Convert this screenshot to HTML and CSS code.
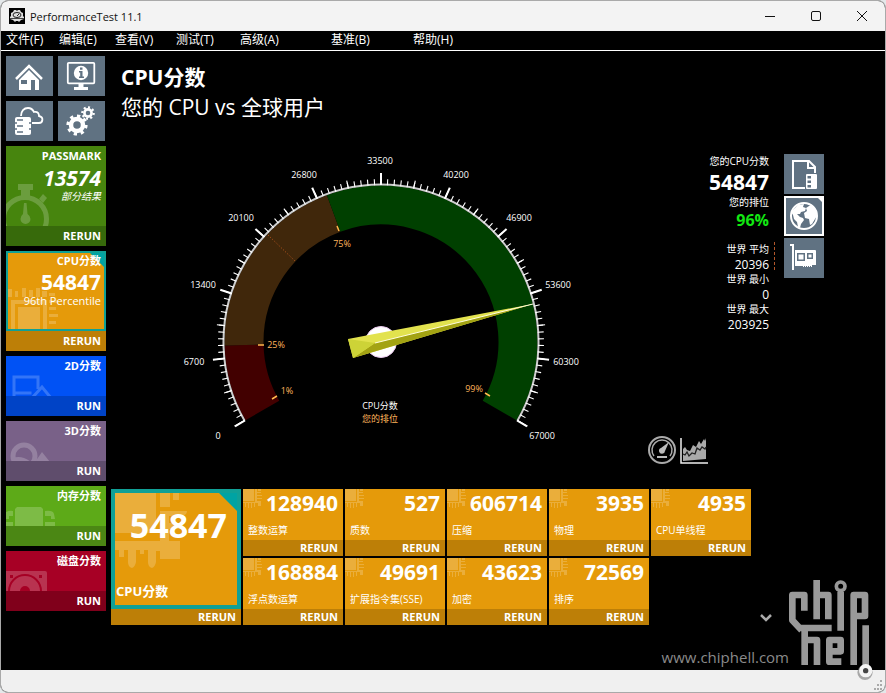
FILE: index.html
```html
<!DOCTYPE html>
<html lang="zh-CN">
<head>
<meta charset="utf-8">
<title>PerformanceTest 11.1</title>
<link rel="stylesheet" href="styles.css">
</head>
<body>
<svg class="defs" aria-hidden="true">
  <symbol id="chip" viewBox="0 0 20 20">
    <path d="M0 0h11v12H0zM12 0h2v13h-2zM14 3h4v1h-4zM14 6h5v1h-5zM14 9h5v1h-5zM0 13h14v1H0zM2 14h1v4H2zM5 14h1v5H5zM8 14h1v5H8zM11 14h1v4h-1zM14 12h4v5h-3v-3h-1zM15 0h3v2h-3z"/>
  </symbol>
</svg>
<div class="window">
  <header class="titlebar">
    <svg class="app-icon" viewBox="0 0 16 16" aria-hidden="true">
      <rect width="16" height="16" fill="#000"/>
      <path fill="#ddd" d="M5 2h2l1 1 1-1h2l1 2 2 1v3l1 1v2l-3 1-2 2-1-1H7l-1 1-2-2-3-1V9l1-1V5l2-1z"/>
      <ellipse cx="8" cy="7" rx="4" ry="2.500" fill="none" stroke="#222"/>
      <path d="M8 8l2-2" stroke="#222"/>
      <path d="M1 10.500h14" stroke="#444"/>
    </svg>
    <span class="app-name">PerformanceTest 11.1</span>
    <div class="window-buttons">
      <button type="button" aria-label="最小化"><svg viewBox="0 0 12 12"><path d="M1 6.500h10"/></svg></button>
      <button type="button" aria-label="最大化"><svg viewBox="0 0 12 12"><rect x="1.500" y="1.500" width="9" height="9" rx="1.500"/></svg></button>
      <button type="button" aria-label="关闭"><svg viewBox="0 0 12 12"><path d="M1 1l10 10M11 1L1 11"/></svg></button>
    </div>
  </header>
  <nav class="menubar">
    <a href="#">文件(F)</a><a href="#">编辑(E)</a><a href="#">查看(V)</a><a href="#">测试(T)</a><a href="#">高级(A)</a><a href="#">基准(B)</a><a href="#">帮助(H)</a>
  </nav>
  <div class="workspace">
    <aside class="sidebar">
      <div class="tools">
        <button class="tool" type="button" aria-label="主页"><svg viewBox="0 0 47 40">
          <path d="M10 23L23 10l13 13" fill="none" stroke="#fff" stroke-width="2.500"/>
          <path fill="#fff" fill-rule="evenodd" d="M13 24L23 14l10 10v10h-4V24h-4v10H13zM15 24v4h6v-4z"/></svg></button>
        <button class="tool" type="button" aria-label="系统信息"><svg viewBox="0 0 47 40">
          <rect x="9.800" y="6.800" width="26.500" height="20.500" rx="1" fill="none" stroke="#fff" stroke-width="1.800"/>
          <circle cx="23" cy="17" r="7.200" fill="#fff"/>
          <path fill="#607282" d="M21 15h3.500v5.500H26V22h-5v-1.500h1.200v-4H21zM22 11.500h2.500v2.300H22z"/>
          <path fill="#fff" d="M20.500 28h5v3H30v3H16v-3h4.500z"/></svg></button>
        <button class="tool" type="button" aria-label="云端基准"><svg viewBox="0 0 47 40">
          <path d="M15 15c0-5 3-8 7-8 3 0 5 2 6 4 4-1 5 2 5 4 5 1 4 7 0 7h-7" fill="none" stroke="#fff" stroke-width="1.800"/>
          <path fill="#fff" d="M11 16h12q2 0 2 2v14q0 2-2 2H11q-2 0-2-2V18q0-2 2-2z"/>
          <path stroke="#607282" stroke-width="1.500" d="M11 19h6M11 25h6M11 31h6M9 22h2M23 22h2M9 28h2M23 28h2"/></svg></button>
        <button class="tool" type="button" aria-label="设置"><svg viewBox="0 0 47 40" fill="none" stroke="#fff">
          <circle cx="19" cy="24" r="6" stroke-width="4.500"/>
          <circle cx="19" cy="24" r="9" stroke-width="3.200" pathLength="80" stroke-dasharray="4.600 5.400"/>
          <circle cx="30" cy="12" r="3.600" stroke-width="2.600"/>
          <circle cx="30" cy="12" r="5.700" stroke-width="2.200" pathLength="80" stroke-dasharray="4.600 5.400"/></svg></button>
      </div>

      <section class="tile passmark">
        <div class="tile-body tall">
          <svg class="art" viewBox="0 0 100 80"><circle cx="19" cy="73" r="21.500" fill="none" stroke="currentColor" stroke-width="5"/><path d="M12 38h15v6h-3v6h-9v-6h-3zM33 53l4-5 4 4-4 5zM18 57h2.500l1 11q3 2 3 5a5 5 0 0 1-10 0q0-3 2.500-5z"/></svg>
          <h2>PASSMARK</h2><strong class="italic">13574</strong><p class="italic">部分结果</p>
        </div>
        <button class="run" type="button">RERUN</button>
      </section>
      <section class="tile cpu">
        <div class="tile-body tall selected">
          <svg class="art" viewBox="2 2 96 76"><path fill-rule="evenodd" d="M5 49h36v31H5zM9 53v27h28V53zM12 56h22v24H12zM2 38h4v8H2zM9 40h3v6H9zM16 37h4v9h-4zM23 39h4v7h-4zM30 37h4v9h-4zM36 40h5v6h-5zM43 42h6v3h-6zM43 49h9v3h-9zM43 56h7v3h-7zM43 63h9v3h-9zM43 70h7v3h-7z"/></svg>
          <h2>CPU分数</h2><strong>54847</strong><p class="percentile-note">96th Percentile</p>
        </div>
        <button class="run" type="button">RERUN</button>
      </section>
      <section class="tile graphics2d">
        <div class="tile-body">
          <svg class="art" viewBox="0 0 100 40"><path fill="none" stroke="currentColor" stroke-width="3" d="M8 40V21h24v12M7.500 37h18M26 42l10-11 9 11"/></svg>
          <h2>2D分数</h2>
        </div>
        <button class="run" type="button">RUN</button>
      </section>
      <section class="tile graphics3d">
        <div class="tile-body">
          <svg class="art" viewBox="0 0 100 40"><circle cx="18" cy="35" r="11" fill="none" stroke="currentColor" stroke-width="5"/><path d="M29 41l7-10 8 10zM7 37q9-3 18 4H7z"/></svg>
          <h2>3D分数</h2>
        </div>
        <button class="run" type="button">RUN</button>
      </section>
      <section class="tile memory">
        <div class="tile-body">
          <svg class="art" viewBox="0 0 100 40"><path d="M11 21h24l2 2v17H9V23zM0 26q4-2 7-1v5H3v3H0zM39 25q8-1 9 3l1 5h-4v-3h-6zM0 36h7v4H0zM39 36h10v4H39z"/></svg>
          <h2>内存分数</h2>
        </div>
        <button class="run" type="button">RUN</button>
      </section>
      <section class="tile disk">
        <div class="tile-body">
          <svg class="art" viewBox="0 0 100 40"><path fill-rule="evenodd" d="M0 20h39q2 0 2 2v18h-5a17 17 0 0 0-34 0H0zM4 24v3h3v-3zM33 24v3h3v-3zM4 40a15 15 0 0 1 30 0h-10a5 5 0 0 0-10 0z"/></svg>
          <h2>磁盘分数</h2>
        </div>
        <button class="run" type="button">RUN</button>
      </section>
    </aside>

    <main class="content">
      <div class="heading">
        <h1>CPU分数</h1>
        <p>您的 CPU vs 全球用户</p>
      </div>

      <div class="overview">
        <svg class="gauge" viewBox="169 150 430 310" role="img" aria-label="CPU分数 54847">
          <g fill="none" stroke-width="39">
            <path stroke="#420000" d="M261.360 410.500A137 137 0 0 1 243.030 345"/>
            <path stroke="#40270b" d="M243.030 345A137 137 0 0 1 332.650 213.440"/>
            <path stroke="#004000" d="M332.650 213.440A137 137 0 0 1 498.640 410.500"/>
          </g>
          <path stroke="#c05a20" stroke-dasharray="1 2" d="M267 235l27 26"/>
          <g fill="none" stroke="#fff">
            <path stroke="#ccc" stroke-width="2" d="M243.600 420.750A157.500 157.500 0 1 1 516.400 420.750"/>
            <path stroke-width="6" pathLength="240" stroke-dasharray=".4 2" stroke-dashoffset=".2" d="M241.400 422A160 160 0 1 1 518.600 422"/>
            <path stroke-width="8" pathLength="240" stroke-dasharray=".4 11.600" stroke-dashoffset=".2" d="M240.570 422.500A161 161 0 1 1 519.430 422.500"/>
            <path stroke-width="12" pathLength="240" stroke-dasharray=".7 23.300" stroke-dashoffset=".35" d="M238.840 423.500A163 163 0 1 1 521.160 423.500"/>
            <path stroke-width="2" d="M244 420.500l-10 5.800M516 420.500l10 5.800"/>
          </g>
          <path stroke="#ffb84d" stroke-width="1.500" d="M257 345h6M271 399l5-3M336 226l2 5M484 393l5 3"/>
          <circle cx="380" cy="342" r="15.500" fill="#fff" stroke="#eccaf0"/>
          <path fill="#e2e24e" d="M347 339L532 304 352 358z"/>
          <path fill="#a3a313" d="M352 358l22-15L532 304z"/>
          <path fill="#cdd337" d="M347 339l5 19 22-15z"/>
          <path fill="none" stroke="#fffde0" d="M374 343L532 304"/>
          <g class="scale">
            <text x="217" y="439">0</text><text x="193" y="365">6700</text><text x="202" y="288">13400</text><text x="240" y="221">20100</text><text x="303" y="178">26800</text><text x="379" y="164">33500</text><text x="455" y="178">40200</text><text x="518" y="221">46900</text><text x="557" y="288">53600</text><text x="565" y="365">60300</text><text x="541" y="439">67000</text><text x="379" y="409">CPU分数</text>
          </g>
          <g class="scale percentile">
            <text x="286" y="394">1%</text><text x="275" y="348">25%</text><text x="341" y="247">75%</text><text x="473" y="392">99%</text><text x="379" y="422">您的排位</text>
          </g>
        </svg>

        <div class="details">
          <div class="details-top">
            <dl class="stats">
              <dt class="first">您的CPU分数</dt><dd class="score">54847</dd>
              <dt class="rank-label">您的排位</dt><dd class="rank">96%</dd>
              <div class="average"><dt>世界 平均</dt><dd>20396</dd></div>
              <dt>世界 最小</dt><dd>0</dd>
              <dt>世界 最大</dt><dd>203925</dd>
            </dl>
            <div class="compare">
              <button class="tool" type="button" aria-label="基准文件"><svg viewBox="0 0 40 40">
                <path d="M21 34H9V7h16l6 6v6M24 7v7h7" fill="none" stroke="#fff" stroke-width="2"/>
                <rect x="22" y="20" width="11" height="15" rx="1" fill="#fff"/>
                <path fill="#607282" d="M23.500 22H27v2.500h-3.500zM23.500 26.500H27V29h-3.500zM23.500 31H27v2.500h-3.500z"/></svg></button>
              <button class="tool active" type="button" aria-label="全球用户"><svg viewBox="0 0 40 40">
                <circle cx="20" cy="20" r="13" fill="none" stroke="#fff" stroke-width="2"/>
                <path fill="#fff" d="M9 14l5-5 6-1-1 3 3 1-1 3-4 1-1 2h-3l3 3 3 1 1 2-3 4-1 4-2-1-1-5-3-3-1-4-2-3zM25 10l3-1 4 5 1 6-2 3-3 5-2 1-1-6-4-1-1-5 3-2-1-3z"/>
                <path fill="#fff" d="M33 1h6v6z"/></svg></button>
              <button class="tool" type="button" aria-label="硬件对比"><svg viewBox="0 0 40 40">
                <path fill="none" stroke="#fff" stroke-width="2" d="M6 7h3v25"/>
                <path fill="#fff" fill-rule="evenodd" d="M11 12h20q1 0 1 1v14h-4v1H11zM13 15v8h8v-8zM23 15v6h6v-6zM14.500 16.500h5v5h-5zM24.500 16.500h3v3h-3z"/>
                <path stroke="#fff" stroke-width="1" d="M19.500 26v3M21.500 26v3M23.500 26v3M25.500 26v3M27.500 26v3"/></svg></button>
            </div>
          </div>
          <div class="views">
            <button type="button" aria-label="仪表视图"><svg viewBox="0 0 28 28">
              <circle cx="14" cy="14" r="13" fill="none" stroke="#aaa" stroke-width="2"/>
              <path d="M6 20a10 10 0 1 1 16 0" fill="none" stroke="#aaa" stroke-width="1.500"/>
              <path fill="#bbb" d="M21 6l-4 9a3 3 0 1 1-4-3zM9 20h10v2H9z"/></svg></button>
            <button class="chart" type="button" aria-label="图表视图"><svg viewBox="0 0 28 28">
              <path fill="#aaa" d="M3 13l2-2 2 3 3 1 3-6 3 2 3-6 2 3 3-5 1 2 1-3v21L3 25z"/>
              <path d="M3 18l2 1 2-3 2 4 3-3 3 1 2-6 3 2 2-3 3 2 1-2" fill="none" stroke="#222" stroke-width="1.300"/>
              <path d="M1 2v25h27" fill="none" stroke="#eee" stroke-width="1.500"/></svg></button>
          </div>
        </div>
      </div>

      <div class="results">
        <section class="tile cpu main-result">
          <div class="tile-body selected">
            <svg class="art" viewBox="0 0 130 120"><path d="M4 4h41v40H4zM49 4h10v14H49zM62 4h6v7h-6zM49 22h27q0 4-5 5H58v7h14v6H58v13H49zM4 52h65v18H49v-8h-4v11q-1 5-4 6-4-1-4-6V61h-4v4h-4v-4h-4v12q-1 5-4 6-4-1-4-6V61h-4v7H8v-7H4z"/></svg>
            <strong>54847</strong><h2>CPU分数</h2>
          </div>
          <button class="run" type="button">RERUN</button>
        </section>
        <div class="result-grid">
          <section class="tile cpu"><div class="tile-body"><svg class="art"><use href="#chip"/></svg><strong>128940</strong><p>整数运算</p></div><button class="run" type="button">RERUN</button></section>
          <section class="tile cpu"><div class="tile-body"><svg class="art"><use href="#chip"/></svg><strong>527</strong><p>质数</p></div><button class="run" type="button">RERUN</button></section>
          <section class="tile cpu"><div class="tile-body"><svg class="art"><use href="#chip"/></svg><strong>606714</strong><p>压缩</p></div><button class="run" type="button">RERUN</button></section>
          <section class="tile cpu"><div class="tile-body"><svg class="art"><use href="#chip"/></svg><strong>3935</strong><p>物理</p></div><button class="run" type="button">RERUN</button></section>
          <section class="tile cpu"><div class="tile-body"><svg class="art"><use href="#chip"/></svg><strong>4935</strong><p>CPU单线程</p></div><button class="run" type="button">RERUN</button></section>
          <section class="tile cpu"><div class="tile-body"><svg class="art"><use href="#chip"/></svg><strong>168884</strong><p>浮点数运算</p></div><button class="run" type="button">RERUN</button></section>
          <section class="tile cpu"><div class="tile-body"><svg class="art"><use href="#chip"/></svg><strong>49691</strong><p>扩展指令集(SSE)</p></div><button class="run" type="button">RERUN</button></section>
          <section class="tile cpu"><div class="tile-body"><svg class="art"><use href="#chip"/></svg><strong>43623</strong><p>加密</p></div><button class="run" type="button">RERUN</button></section>
          <section class="tile cpu"><div class="tile-body"><svg class="art"><use href="#chip"/></svg><strong>72569</strong><p>排序</p></div><button class="run" type="button">RERUN</button></section>
        </div>
        <button class="more" type="button" aria-label="更多"><svg viewBox="0 0 12 10"><path d="M1 2l5 5 5-5" fill="none" stroke="#aaa" stroke-width="2.500"/></svg></button>
      </div>
    </main>
  </div>
  <footer class="statusbar">
    <svg class="grip" viewBox="0 0 10 10" aria-hidden="true"><path fill="#aaa" d="M7 0h2v2H7zM7 4h2v2H7zM7 8h2v2H7zM4 4h2v2H4zM4 8h2v2H4zM1 8h2v2H1z"/></svg>
  </footer>
  <div class="watermark">
    <span>www.chiphell.com</span>
    <svg viewBox="441 54 258 306" role="img" aria-label="chiphell">
      <g fill="none" stroke="#999" stroke-width="20" stroke-linejoin="round">
        <path d="M493 152v-47H457v76l28 30M483 204h92M494 200v115M494 240h37v75"/>
        <path d="M530 60v118M530 105h35v73"/>
        <path d="M602 96v116"/>
        <path d="M641 315V105h34v63h-34"/>
        <path d="M604 305h-36v-65h34v34h-34"/>
        <path d="M677 196v122"/>
        <circle cx="602" cy="79" r="13" stroke-width="11"/>
      </g>
      <circle cx="675" cy="337" r="15" fill="none" stroke="#777" stroke-width="16" opacity=".6"/>
      <circle cx="677" cy="332" r="14" fill="#444" stroke="#f4f4f4" stroke-width="12"/>
    </svg>
  </div>
</div>
</body>
</html>
```

FILE: styles.css
```css
* { box-sizing: border-box; }

body {
  margin: 0;
  background: #e4e8ea;
  color: #fff;
  font-family: "Open Sans", "Noto Sans CJK SC", sans-serif;
  font-size: 12px;
}

h1, h2, p, dl, dd { margin: 0; }

button {
  display: block;
  margin: 0;
  padding: 0;
  border: 0;
  background: none;
  color: inherit;
  font: inherit;
}

svg { display: block; }

.defs { position: absolute; width: 0; height: 0; }

.window {
  position: relative;
  display: flex;
  flex-direction: column;
  min-height: 100vh;
  overflow: hidden;
  border: 1px solid #a9a9a9;
  border-radius: 8px;
  background: #000;
}

.titlebar {
  display: flex;
  align-items: center;
  height: 30px;
  padding-left: 8px;
  background: #f3f3f3;
  color: #111;
}
.app-icon { width: 16px; height: 16px; }
.app-name { margin-left: 5px; font-size: 11px; }
.window-buttons { display: flex; margin-left: auto; }
.window-buttons button { width: 46px; height: 30px; }
.window-buttons svg {
  width: 12px;
  height: 12px;
  margin: auto;
  fill: none;
  stroke: #111;
}

.menubar {
  display: grid;
  grid-template-columns: 53px 56px 61px 64px 91px 82px auto;
  height: 20px;
  padding-left: 5px;
  border-bottom: 1px solid #fff;
  line-height: 18px;
}
.menubar a { color: #fff; text-decoration: none; }

.workspace { display: flex; flex: 1; gap: 5px; padding: 5px; }

.sidebar { display: flex; flex-direction: column; flex: none; gap: 5px; width: 100px; }
.tools { display: grid; grid-template-columns: 47px 47px; gap: 5px; }
.tool { height: 40px; background: #607282; }
.tool svg { width: 100%; height: 40px; }
.tool.active { box-shadow: inset 0 0 0 2px #fff; }

.tile { display: flex; flex-direction: column; text-align: right; }
.tile-body {
  position: relative;
  height: 40px;
  padding-right: 5px;
  overflow: hidden;
  background: var(--tile);
}
.tile-body.tall { height: 80px; }
.tile h2, .tile strong, .tile p { position: relative; display: block; }
.tile h2 { font-size: 11px; line-height: 20px; }
.tile strong { font-size: 21px; line-height: 24px; }
.tile p { font-size: 10px; line-height: 12px; white-space: nowrap; }
.tile .percentile-note { font-size: 11px; }
.italic { font-style: italic; }
.art {
  position: absolute;
  top: 0;
  left: 0;
  width: 100%;
  color: #fff;
  fill: currentColor;
  opacity: .2;
}
.run {
  height: 20px;
  padding-right: 5px;
  background: var(--tile-dark);
  font-size: 11px;
  font-weight: bold;
  line-height: 20px;
  text-align: right;
}

.passmark { --tile: #47850e; --tile-dark: #376a0b; }
.cpu { --tile: #e59a0a; --tile-dark: #bd7f07; }
.graphics2d { --tile: #0052f5; --tile-dark: #0043c6; }
.graphics3d { --tile: #796188; --tile-dark: #5f4d6c; }
.memory { --tile: #5daa18; --tile-dark: #4b8714; }
.disk { --tile: #a70025; --tile-dark: #80001b; }

.selected { border: 2px solid #10a096; }
.tall.selected { padding-right: 3px; }
.tall.selected h2 { line-height: 16px; }
.tall.selected strong { line-height: 26px; }
.selected::before {
  content: "";
  position: absolute;
  top: 0;
  right: 0;
  width: 14px;
  height: 14px;
  background: #00a3a3;
  clip-path: polygon(0 0, 100% 0, 100% 100%);
}

.content { display: flex; flex: 1; flex-direction: column; min-width: 0; }
.heading { padding: 6px 10px 0; }
.heading h1, .heading p { font-size: 21px; line-height: 30px; }

.overview { display: flex; gap: 48px; padding: 28px 0 0 59px; }
.gauge { flex: 0 1 430px; min-width: 0; }
.scale { fill: #fff; font-size: 9px; text-anchor: middle; }
.percentile { fill: #ffb45c; }

.details { display: flex; flex-direction: column; justify-content: space-between; width: 176px; padding-top: 4px; }
.details-top { display: flex; justify-content: flex-end; gap: 15px; }
.stats { text-align: right; line-height: 15px; }
.stats dt { font-size: 10px; }
.stats dd { font-size: 12px; }
.stats .first { line-height: 15px; }
.stats .score { font-size: 21px; font-weight: bold; line-height: 27px; }
.stats .rank-label { line-height: 12px; }
.stats .rank { color: #12e812; font-size: 16px; font-weight: bold; line-height: 24px; }
.average { position: relative; margin-top: 10px; }
.average::after {
  content: "";
  position: absolute;
  top: 0;
  right: -6px;
  bottom: 2px;
  border-right: 1px dashed #b4572a;
}
.compare { display: flex; flex-direction: column; gap: 2px; width: 40px; }
.views { display: flex; gap: 4px; margin-bottom: -4px; }
.views svg { width: 28px; height: 28px; }

.results { display: flex; gap: 2px; padding-top: 29px; }
.result-grid { display: grid; grid-template-columns: repeat(5, 100px); gap: 2px; }
.results .tile-body { display: flex; flex-direction: column; justify-content: space-between; height: 51px; }
.results .tile-body strong { line-height: 28px; }
.results .tile-body p { padding-left: 5px; line-height: 20px; text-align: left; }
.results .run { height: 16px; line-height: 16px; }
.result-grid .art { width: 20px; height: 20px; }

.results .main-result { width: 130px; }
.results .main-result .tile-body { height: 120px; padding: 12px 10px 4px 1px; border-width: 4px; }
.results .main-result strong { font-size: 34px; line-height: 40px; }
.main-result h2 { font-size: 13px; text-align: left; }
.main-result .art { top: -4px; left: -4px; width: 130px; height: 120px; }
.main-result .selected::before { width: 18px; height: 18px; }

.more { align-self: flex-end; margin-left: 7px; }
.more svg { width: 12px; height: 14px; }

.statusbar { display: flex; align-items: flex-end; justify-content: flex-end; height: 22px; padding: 2px; background: #f0f0f0; }
.grip { width: 10px; height: 10px; }

.watermark {
  position: absolute;
  right: 12px;
  bottom: 12px;
  display: flex;
  align-items: flex-end;
  color: #8a8a8a;
  font-size: 15px;
  line-height: 46px;
  pointer-events: none;
}
.watermark span { margin-right: -2px; }
.watermark svg { width: 86px; height: 102px; }
```
